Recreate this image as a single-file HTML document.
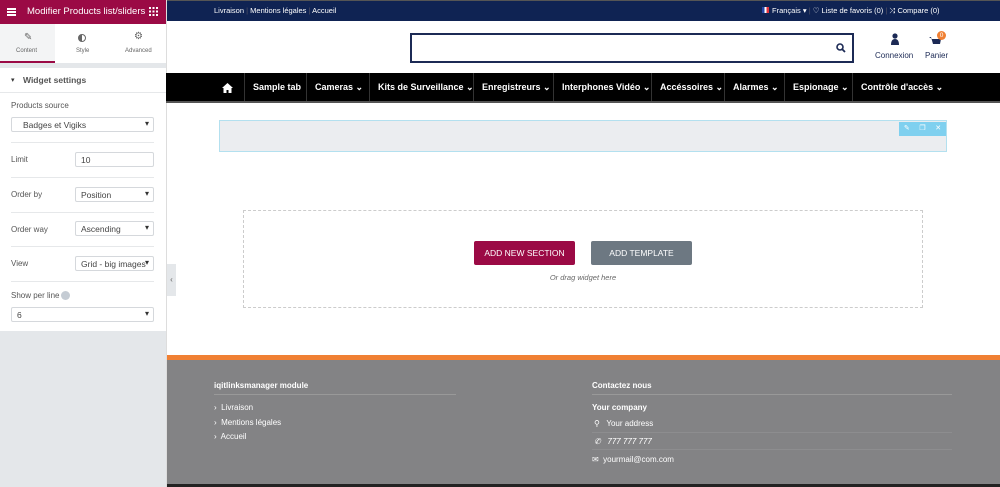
<!DOCTYPE html>
<html><head><meta charset="utf-8"><style>
*{margin:0;padding:0;box-sizing:border-box}
body{width:1000px;height:487px;overflow:hidden;position:relative;font-family:"Liberation Sans",sans-serif;background:#fff}
.a{position:absolute}
.sb{left:0;top:0;width:166px;height:487px;background:#e4e7ea}
.lbl{font-size:8px;color:#555}
.sel{position:absolute;border:1px solid #d5d8dc;background:#fff;font-size:8.5px;color:#444;height:15px;padding:2px 5px;border-radius:2px}
.sel::after{content:"▾";position:absolute;right:4px;top:1px;font-size:8px;color:#333}
.sep{position:absolute;left:11px;width:143px;height:1px;background:#e6e8ea}
.nav{left:166px;top:73px;width:834px;height:30px;background:#000;border-bottom:2px solid #555}
.ni{position:absolute;top:73px;height:28px;line-height:29px;color:#fff;font-size:9px;font-weight:bold;border-left:1px solid #333;padding-left:8px;white-space:nowrap}
.ft{color:#fff;font-size:8px;font-weight:bold}
</style></head><body>
<div class="a sb"></div>
<div class="a" style="left:0;top:0;width:166px;height:331px;background:#fff"></div>
<div class="a" style="left:0;top:0;width:166px;height:24px;background:#9b0a45"></div>
<div class="a" style="left:7px;top:8px;width:9px;height:1.5px;background:#fff;box-shadow:0 3px 0 #fff,0 6px 0 #fff"></div>
<div class="a" style="left:27px;top:6px;color:#fff;font-size:9.5px">Modifier Products list/sliders</div>
<div class="a" style="left:149px;top:7px;width:9px;height:9px;background:repeating-linear-gradient(90deg,#fff 0 2px,transparent 2px 3.5px);-webkit-mask:repeating-linear-gradient(0deg,#000 0 2px,transparent 2px 3.5px)"></div>
<div class="a" style="left:0;top:24px;width:55px;height:39px;background:#f3f4f5;border-bottom:2px solid #9b0a45"></div>
<div class="a" style="left:24px;top:32px;font-size:10px;color:#666">✎</div>
<div class="a" style="left:16px;top:48px;font-size:6px;color:#666">Content</div>
<div class="a" style="left:78px;top:34px;width:8px;height:8px;border-radius:50%;border:1.5px solid #666;background:linear-gradient(90deg,#666 50%,#fff 50%)"></div>
<div class="a" style="left:76px;top:48px;font-size:6px;color:#666">Style</div>
<div class="a" style="left:134px;top:31px;font-size:10px;color:#666">⚙</div>
<div class="a" style="left:125px;top:48px;font-size:6px;color:#666">Advanced</div>
<div class="a" style="left:0;top:63px;width:166px;height:5px;background:#e4e7ea"></div>
<div class="a" style="left:11px;top:76px;font-size:7px;color:#333">▾</div>
<div class="a" style="left:23px;top:75px;font-size:8.5px;font-weight:bold;color:#555">Widget settings</div>
<div class="a" style="left:0;top:92px;width:166px;height:1px;background:#e6e8ea"></div>
<div class="a lbl" style="left:11px;top:101px">Products source</div>
<div class="sel" style="left:11px;top:117px;width:143px;padding-left:11px">Badges et Vigiks</div>
<div class="sep" style="top:142px"></div>
<div class="a lbl" style="left:11px;top:155px">Limit</div>
<div class="a" style="left:75px;top:152px;width:79px;height:15px;border:1px solid #d5d8dc;border-radius:2px;font-size:8.5px;color:#444;padding:2px 5px">10</div>
<div class="sep" style="top:177px"></div>
<div class="a lbl" style="left:11px;top:190px">Order by</div>
<div class="sel" style="left:75px;top:187px;width:79px">Position</div>
<div class="sep" style="top:212px"></div>
<div class="a lbl" style="left:11px;top:225px">Order way</div>
<div class="sel" style="left:75px;top:221px;width:79px">Ascending</div>
<div class="sep" style="top:246px"></div>
<div class="a lbl" style="left:11px;top:259px">View</div>
<div class="sel" style="left:75px;top:256px;width:79px">Grid - big images</div>
<div class="sep" style="top:281px"></div>
<div class="a lbl" style="left:11px;top:291px">Show per line</div>
<div class="a" style="left:61px;top:291px;width:9px;height:9px;border-radius:50%;background:#c5ccd4"></div>
<div class="sel" style="left:11px;top:307px;width:143px">6</div>
<div class="a" style="left:166px;top:0;width:1px;height:487px;background:#ddd"></div>
<div class="a" style="left:167px;top:264px;width:9px;height:32px;background:#e4e7ea;font-size:8px;color:#666;line-height:32px;text-align:center">‹</div>

<div class="a" style="left:167px;top:0;width:833px;height:21px;background:#0f2353;border-top:1px solid #555"></div>
<div class="a" style="left:214px;top:6px;color:#fff;font-size:7.5px;white-space:nowrap">Livraison <span style="color:#556">|</span> Mentions légales <span style="color:#556">|</span> Accueil</div>
<div class="a" style="left:762px;top:7px;width:7px;height:6px;background:linear-gradient(90deg,#2446a8 33%,#fff 33% 66%,#e0313b 66%)"></div>
<div class="a" style="left:772px;top:6px;color:#fff;font-size:7.5px;white-space:nowrap">Français ▾ <span style="color:#556">|</span> ♡ Liste de favoris (0) <span style="color:#556">|</span> ⤨ Compare (0)</div>

<div class="a" style="left:410px;top:33px;width:444px;height:30px;border:2px solid #1c2a55"></div>
<svg class="a" style="left:836px;top:43px" width="10" height="10" viewBox="0 0 10 10"><circle cx="4" cy="4" r="3" fill="none" stroke="#1c2a55" stroke-width="1.6"/><path d="M6 6l3 3" stroke="#1c2a55" stroke-width="1.8"/></svg>
<svg class="a" style="left:890px;top:33px" width="10" height="12" viewBox="0 0 10 12"><circle cx="5" cy="3" r="2.6" fill="#1c2a55"/><path d="M1 12q0-6 4-6t4 6z" fill="#1c2a55"/></svg>
<div class="a" style="left:875px;top:51px;color:#1c2a55;font-size:8px">Connexion</div>
<svg class="a" style="left:929px;top:34px" width="12" height="12" viewBox="0 0 12 12"><path d="M0 3h2l2 7h7l1-5H3" fill="#1c2a55"/></svg>
<div class="a" style="left:937px;top:31px;width:9px;height:9px;border-radius:50%;background:#f08033;color:#fff;font-size:6.5px;text-align:center;line-height:9px">0</div>
<div class="a" style="left:925px;top:51px;color:#1c2a55;font-size:8px">Panier</div>

<div class="a nav"></div>
<svg class="a" style="left:222px;top:83px" width="11" height="10" viewBox="0 0 11 10"><path d="M5.5 0L0 5h1.5v5h3V7h2v3h3V5H11z" fill="#fff"/></svg>
<div class="ni" style="left:244px;width:62px">Sample tab</div>
<div class="ni" style="left:306px;width:63px">Cameras ⌄</div>
<div class="ni" style="left:369px;width:104px">Kits de Surveillance ⌄</div>
<div class="ni" style="left:473px;width:80px">Enregistreurs ⌄</div>
<div class="ni" style="left:553px;width:98px">Interphones Vidéo ⌄</div>
<div class="ni" style="left:651px;width:73px">Accéssoires ⌄</div>
<div class="ni" style="left:724px;width:60px">Alarmes ⌄</div>
<div class="ni" style="left:784px;width:68px">Espionage ⌄</div>
<div class="ni" style="left:852px;width:90px">Contrôle d'accès ⌄</div>

<div class="a" style="left:219px;top:120px;width:728px;height:32px;background:#ebedf0;border:1px solid #b3e0ef"></div>
<div class="a" style="left:899px;top:122px;width:47px;height:14px;background:#7fd0ef"></div>
<div class="a" style="left:899px;top:122px;width:47px;height:14px;color:#fff;font-size:7px;line-height:14px;display:flex;justify-content:space-around"><span>✎</span><span>❐</span><span>✕</span></div>

<div class="a" style="left:243px;top:210px;width:680px;height:98px;border:1px dashed #ccc"></div>
<div class="a" style="left:474px;top:241px;width:101px;height:24px;background:#9b0a45;border-radius:2px;color:#fff;font-size:8.5px;text-align:center;line-height:24px">ADD NEW SECTION</div>
<div class="a" style="left:591px;top:241px;width:101px;height:24px;background:#6d7882;border-radius:2px;color:#fff;font-size:8.5px;text-align:center;line-height:24px">ADD TEMPLATE</div>
<div class="a" style="left:474px;top:273px;width:218px;text-align:center;font-size:7.5px;font-style:italic;color:#666">Or drag widget here</div>

<div class="a" style="left:167px;top:355px;width:833px;height:5px;background:#f08033"></div>
<div class="a" style="left:167px;top:360px;width:833px;height:125px;background:#838385"></div>
<div class="a" style="left:167px;top:484px;width:833px;height:3px;background:#222"></div>
<div class="a ft" style="left:214px;top:381px">iqitlinksmanager module</div>
<div class="a" style="left:214px;top:394px;width:242px;height:1px;background:#999"></div>
<div class="a ft" style="left:214px;top:403px;font-weight:normal">›&nbsp; Livraison</div>
<div class="a ft" style="left:214px;top:418px;font-weight:normal">›&nbsp; Mentions légales</div>
<div class="a ft" style="left:214px;top:432px;font-weight:normal">›&nbsp; Accueil</div>
<div class="a ft" style="left:592px;top:381px">Contactez nous</div>
<div class="a" style="left:592px;top:394px;width:360px;height:1px;background:#999"></div>
<div class="a ft" style="left:592px;top:403px">Your company</div>
<div class="a ft" style="left:594px;top:419px;font-weight:normal">⚲&nbsp;&nbsp; Your address</div>
<div class="a" style="left:592px;top:432px;width:360px;height:1px;background:#8d8d8f"></div>
<div class="a ft" style="left:594px;top:437px;font-weight:normal;font-style:italic">✆&nbsp;&nbsp; 777 777 777</div>
<div class="a" style="left:592px;top:449px;width:360px;height:1px;background:#8d8d8f"></div>
<div class="a ft" style="left:592px;top:455px;font-weight:normal">✉&nbsp; yourmail@com.com</div>
</body></html>
